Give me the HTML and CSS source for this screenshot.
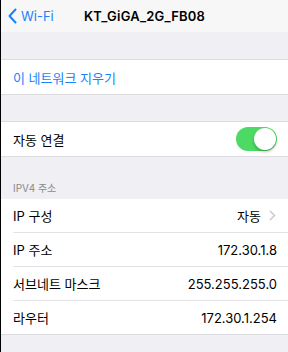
FILE: index.html
```html
<!DOCTYPE html>
<html lang="ko">
<head>
  <meta charset="UTF-8">
  <meta name="viewport" content="width=device-width, initial-scale=1.0">
  <title>KT_GiGA_2G_FB08</title>
  <link rel="stylesheet" href="styles.css">
</head>
<body>
  <div class="screen">
    <div class="navbar">
      <div class="back">
        <svg width="9" height="16" viewBox="0 0 9 16"><path d="M7.5 1.5 L1.5 8 L7.5 14.5" fill="none" stroke="#1a82fb" stroke-width="2" stroke-linecap="round" stroke-linejoin="round"/></svg>
        <span>Wi-Fi</span>
      </div>
      <div class="title">KT_GiGA_2G_FB08</div>
    </div>

    <div class="gap"></div>
    <div class="group">
      <div class="row"><span class="link">이 네트워크 지우기</span></div>
    </div>

    <div class="gap gap-short"></div>
    <div class="group">
      <div class="row">
        <span>자동 연결</span>
        <div class="toggle"><div class="knob"></div></div>
      </div>
    </div>

    <div class="section-header">IPV4 주소</div>
    <div class="group group-list">
      <div class="row">
        <span>IP 구성</span>
        <span class="value">자동
          <svg class="chevron" width="7" height="11" viewBox="0 0 7 11"><path d="M1 1 L5.5 5.5 L1 10" fill="none" stroke="#c7c7cc" stroke-width="1.4"/></svg>
        </span>
      </div>
      <div class="row"><span>IP 주소</span><span class="value">172.30.1.8</span></div>
      <div class="row"><span>서브네트 마스크</span><span class="value">255.255.255.0</span></div>
      <div class="row"><span>라우터</span><span class="value">172.30.1.254</span></div>
    </div>
  </div>
</body>
</html>
```

FILE: styles.css
```css
body {
  margin: 0;
  font-family: Inter, "Noto Sans CJK KR", sans-serif;
  background: #efeff4;
  color: #000;
}
.screen {
  width: 287px;
  height: 352px;
  border-left: 1px solid #000;
  background: #efeff4;
  overflow: hidden;
}
.navbar {
  height: 32px;
  background: #f7f7f7;
  display: flex;
  align-items: center;
  justify-content: center;
  position: relative;
}
.back {
  position: absolute;
  left: 7px;
  top: 0;
  height: 32px;
  display: flex;
  align-items: center;
  gap: 4px;
  color: #1a82fb;
  font-size: 13px;
}
.title {
  font-size: 13px;
  font-weight: 600;
  letter-spacing: 0.2px;
}
.gap {
  height: 27px;
}
.gap-short {
  height: 26px;
}
.group {
  background: #fff;
  border-top: 1px solid #dcdce0;
  border-bottom: 1px solid #dcdce0;
}
.group-list {
  border-top: none;
}
.row {
  height: 34px;
  margin-left: 12px;
  padding-right: 11px;
  display: flex;
  align-items: center;
  justify-content: space-between;
  font-size: 13px;
  border-bottom: 1px solid #e2e2e6;
}
.group-list .row {
  height: 33px;
}
.row:last-child {
  border-bottom: none;
}
.link {
  color: #1a82fb;
}
.value {
  display: flex;
  align-items: center;
  gap: 8px;
}
.chevron {
  margin-right: 1px;
}
.toggle {
  width: 41px;
  height: 24px;
  border-radius: 12px;
  background: #4cd964;
  display: flex;
  align-items: center;
  justify-content: flex-end;
  padding: 0 1px;
  box-sizing: border-box;
}
.knob {
  width: 22px;
  height: 22px;
  border-radius: 50%;
  background: #fff;
  box-shadow: 0 2px 3px rgba(0, 0, 0, 0.25);
}
.section-header {
  height: 42px;
  box-sizing: border-box;
  padding: 23px 0 0 12px;
  font-size: 10px;
  color: #8a8a8f;
}
```
